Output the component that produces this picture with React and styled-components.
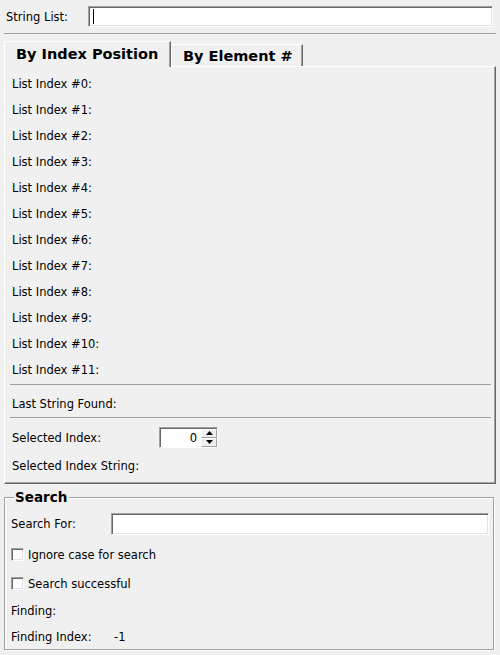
import React from "react";
import styled, { createGlobalStyle } from "styled-components";

const GlobalStyle = createGlobalStyle`
  html, body {
    margin: 0;
    padding: 0;
    background: #f0f0f0;
  }
  body {
    font-family: "DejaVu Sans", Tahoma, sans-serif;
    font-size: 11.5px;
    color: #000;
  }
`;

const Window = styled.div`
  width: 500px;
  height: 655px;
  display: flex;
  flex-direction: column;
  overflow: hidden;
`;

const TopRow = styled.div`
  display: flex;
  align-items: center;
  height: 21px;
  margin-top: 6px;
  padding-left: 6px;
`;

const Label = styled.span`
  flex: none;
  width: ${(p) => (p.$w ? `${p.$w}px` : "auto")};
  white-space: nowrap;
`;

const TextBox = styled.div`
  box-sizing: border-box;
  flex: none;
  display: flex;
  align-items: center;
  width: ${(p) => p.$w}px;
  height: ${(p) => p.$h || 21}px;
  background: #fff;
  border-top: 1px solid #a0a0a0;
  border-left: 1px solid #a0a0a0;
  border-right: 1px solid #fff;
  border-bottom: 1px solid #fff;
  box-shadow: inset 1px 1px 0 #696969, inset -1px -1px 0 #e3e3e3;
`;

const Caret = styled.span`
  width: 1px;
  height: 15px;
  margin-left: 4px;
  background: #000;
`;

const Separator = styled.div`
  flex: none;
  height: 1px;
  background: #a0a0a0;
  margin: ${(p) => p.$top || 0}px ${(p) => p.$right || 0}px 0 ${(p) => p.$left || 0}px;
`;

const TabBar = styled.div`
  display: flex;
  height: 26px;
  margin: 7px 0 -1px 4px;
  position: relative;
  z-index: 1;
`;

const Tab = styled.div`
  box-sizing: border-box;
  display: flex;
  align-items: center;
  width: ${(p) => p.$w}px;
  height: ${(p) => (p.$active ? 26 : 22)}px;
  margin-top: ${(p) => (p.$active ? 0 : 3)}px;
  padding: ${(p) => (p.$active ? "0 0 2px 11px" : "0 0 0 11px")};
  background: #f0f0f0;
  border-top: 1px solid #fff;
  border-left: 1px solid #fff;
  border-right: 1px solid #696969;
  box-shadow: inset -1px 0 0 #a0a0a0;
  font-weight: bold;
  font-size: 14.5px;
  white-space: nowrap;
`;

const Panel = styled.div`
  box-sizing: border-box;
  height: 418px;
  margin: 0 4px;
  padding-top: 3px;
  display: flex;
  flex-direction: column;
  border-top: 1px solid #fff;
  border-left: 1px solid #fff;
  border-right: 1px solid #696969;
  border-bottom: 1px solid #696969;
  box-shadow: inset -1px -1px 0 #a0a0a0;
`;

const Row = styled.div`
  box-sizing: border-box;
  flex: none;
  display: flex;
  align-items: center;
  height: ${(p) => p.$h || 26}px;
  margin-top: ${(p) => p.$mt || 0}px;
  padding-top: ${(p) => (p.$pt === undefined ? 2 : p.$pt)}px;
  padding-left: ${(p) => (p.$pl === undefined ? 7 : p.$pl)}px;
  white-space: nowrap;
`;

const Spinner = styled.div`
  box-sizing: border-box;
  display: flex;
  width: 59px;
  height: 21px;
  margin-top: -2px;
  background: #fff;
  border-top: 1px solid #a0a0a0;
  border-left: 1px solid #a0a0a0;
  border-right: 1px solid #fff;
  border-bottom: 1px solid #fff;
  box-shadow: inset 1px 1px 0 #696969;
  padding: 1px 0 0 1px;
`;

const SpinValue = styled.div`
  flex: 1;
  display: flex;
  align-items: center;
  justify-content: flex-end;
  padding-right: 4px;
`;

const SpinButtons = styled.div`
  width: 16px;
  display: flex;
  flex-direction: column;
`;

const SpinButton = styled.div`
  box-sizing: border-box;
  flex: 1;
  display: flex;
  align-items: center;
  justify-content: center;
  background: #f0f0f0;
  border-top: 1px solid #fff;
  border-left: 1px solid #fff;
  border-right: 1px solid #a0a0a0;
  border-bottom: 1px solid #a0a0a0;
`;

const Arrow = ({ down }) => (
  <svg width="7" height="4" viewBox="0 0 7 4">
    <path d={down ? "M0 0H7L3.5 4Z" : "M0 4H7L3.5 0Z"} fill="#000" />
  </svg>
);

const Group = styled.div`
  box-sizing: border-box;
  position: relative;
  height: 153px;
  margin: 13px 6px 0 4px;
  padding: 15px 0 0 6px;
  border: 1px solid #a0a0a0;
  box-shadow: inset 1px 1px 0 #fff, 1px 1px 0 #fff;
`;

const Legend = styled.div`
  position: absolute;
  top: -9px;
  left: 9px;
  padding: 0 2px 0 1px;
  line-height: 17px;
  background: #f0f0f0;
  font-weight: bold;
  font-size: 13.5px;
`;

const CheckBox = styled.span`
  box-sizing: border-box;
  flex: none;
  width: 13px;
  height: 13px;
  margin: -1px 4px 0 0;
  background: #fff;
  border-top: 1px solid #a0a0a0;
  border-left: 1px solid #a0a0a0;
  border-right: 1px solid #fff;
  border-bottom: 1px solid #fff;
  box-shadow: inset 1px 1px 0 #696969, inset -1px -1px 0 #e3e3e3;
`;

const indexes = Array.from({ length: 12 }, (_, i) => i);

export default function App() {
  return (
    <Window>
      <GlobalStyle />
      <TopRow>
        <Label $w={82}>String List:</Label>
        <TextBox $w={405}>
          <Caret />
        </TextBox>
      </TopRow>
      <Separator $top={6} $left={4} $right={4} />

      <TabBar>
        <Tab $active $w={167}>By Index Position</Tab>
        <Tab $w={132}>By Element #</Tab>
      </TabBar>
      <Panel>
        {indexes.map((i) => (
          <Row key={i}>List Index #{i}:</Row>
        ))}
        <Separator $top={2} $left={5} $right={4} />
        <Row $mt={5}>Last String Found:</Row>
        <Separator $top={1} $left={5} $right={4} />
        <Row $mt={6}>
          <Label $w={147}>Selected Index:</Label>
          <Spinner>
            <SpinValue>0</SpinValue>
            <SpinButtons>
              <SpinButton>
                <Arrow />
              </SpinButton>
              <SpinButton>
                <Arrow down />
              </SpinButton>
            </SpinButtons>
          </Spinner>
        </Row>
        <Row $mt={2}>Selected Index String:</Row>
      </Panel>

      <Group>
        <Legend>Search</Legend>
        <Row $h={22} $pl={0} $pt={0}>
          <Label $w={100}>Search For:</Label>
          <TextBox $w={378} $h={22} />
        </Row>
        <Row $h={29} $mt={4} $pl={0}>
          <CheckBox />
          Ignore case for search
        </Row>
        <Row $h={29} $pl={0}>
          <CheckBox />
          Search successful
        </Row>
        <Row $pl={0}>Finding:</Row>
        <Row $pl={0}>
          <Label $w={103}>Finding Index:</Label>
          -1
        </Row>
      </Group>
    </Window>
  );
}
